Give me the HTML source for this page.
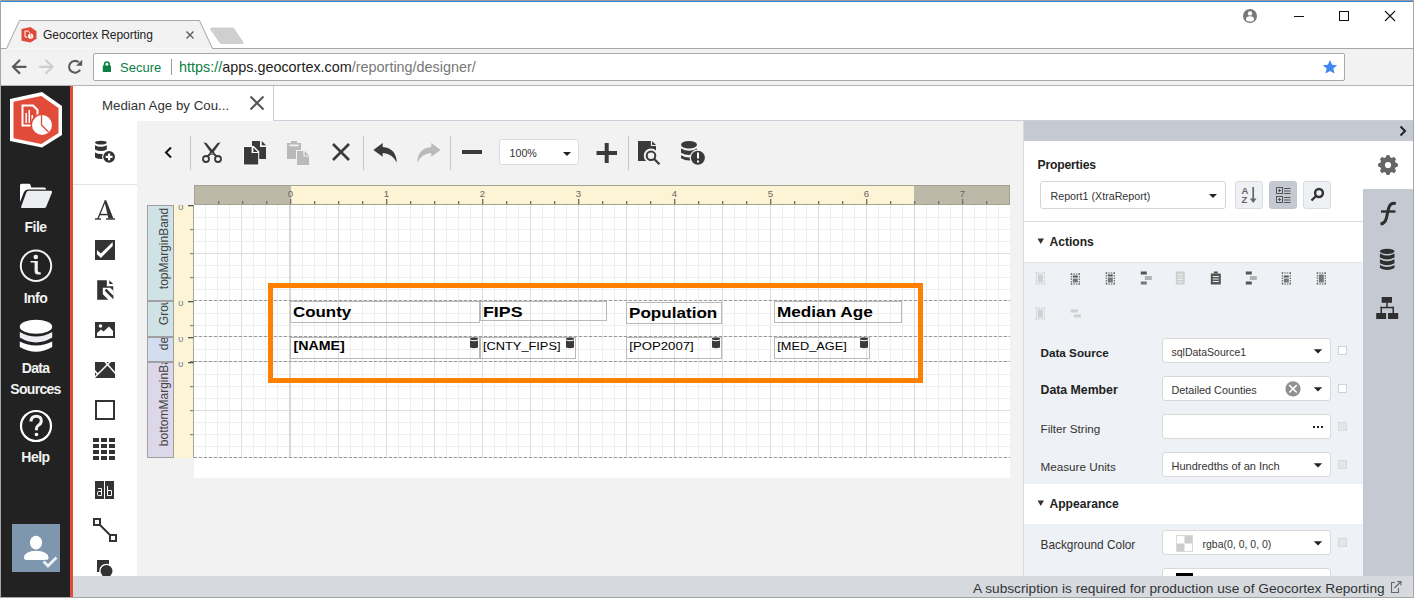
<!DOCTYPE html>
<html><head><meta charset="utf-8">
<style>
*{margin:0;padding:0;box-sizing:border-box}
html,body{width:1414px;height:598px;overflow:hidden;background:#fff;font-family:"Liberation Sans",sans-serif;position:relative}
.a{position:absolute}
svg{position:absolute;overflow:visible}
</style></head><body>

<!-- window border -->
<div class="a" style="left:0;top:0;width:1414px;height:1px;background:#9a9a9a"></div>
<div class="a" style="left:0;top:1px;width:1414px;height:1px;background:#2f86d8"></div>
<div class="a" style="left:0;top:0;width:1px;height:598px;background:#a6a6a6"></div>
<div class="a" style="left:1413px;top:0;width:1px;height:598px;background:#a6a6a6"></div>

<!-- CHROME TABSTRIP -->
<svg style="left:0;top:0" width="1414" height="90">
  <path d="M1 48.5 H6.5 L19.5 20.5 H199.5 L212.5 48.5 H1413" fill="#f2f2f2" stroke="#a6a6a6" stroke-width="1"/>
  <rect x="1" y="49" width="1412" height="36" fill="#f2f2f2"/>
  <path d="M212.5 27.5 H232.5 Q234 27.5 235 29.5 L243 41.5 Q244.5 44 242 44 H221.5 Q220 44 219 42 L210.5 30 Q209.5 27.5 212.5 27.5Z" fill="#cfcfcf"/>
</svg>


<!-- favicon -->
<svg style="left:0;top:0" width="50" height="50" viewBox="0 0 50 50">
  <path d="M30.5 27 L36.5 31.2 L36.5 38.7 L30.5 42.6 L21.5 40.7 L21.5 29.1Z" fill="#e04a3a"/>
  <path d="M25 31 H28.2 L29.5 32.3 V37 H25Z" fill="none" stroke="#fff" stroke-width="1"/>
  <circle cx="30.7" cy="36.2" r="3.2" fill="#e04a3a"/>
  <circle cx="30.7" cy="36.2" r="2.6" fill="#fff"/>
  <path d="M30.5 33.6 V36.3 L32.3 38" fill="none" stroke="#e04a3a" stroke-width="0.6"/>
</svg>
<div class="a" style="left:43px;top:28px;font-size:12px;color:#222;white-space:nowrap;letter-spacing:-0.05px">Geocortex Reporting</div>
<svg style="left:185px;top:30px" width="10" height="10"><path d="M1.5 1.5 L8.5 8.5 M8.5 1.5 L1.5 8.5" stroke="#5a5a5a" stroke-width="1.4"/></svg>

<!-- profile / window controls -->
<svg style="left:1242px;top:8px" width="16" height="16" viewBox="0 0 16 16">
  <circle cx="8" cy="8" r="7" fill="#777"/>
  <circle cx="8" cy="5.4" r="2.2" fill="#fff"/>
  <ellipse cx="8" cy="10.9" rx="4" ry="2.6" fill="#fff"/>
</svg>
<div class="a" style="left:1294px;top:16px;width:10px;height:1px;background:#111"></div>
<div class="a" style="left:1339px;top:11px;width:10px;height:10px;border:1px solid #111"></div>
<svg style="left:1384px;top:10px" width="12" height="12"><path d="M1 1 L11 11 M11 1 L1 11" stroke="#111" stroke-width="1.1"/></svg>

<!-- toolbar -->
<svg style="left:0;top:50px" width="90" height="30" viewBox="0 50 90 30">
  <path d="M25.6 66.8 H13 M19.4 60.5 L13 66.8 L19.4 73.1" fill="none" stroke="#5a5a5a" stroke-width="2.2" stroke-linecap="round"/>
  <path d="M40 66.8 H52.6 M46.2 60.5 L52.6 66.8 L46.2 73.1" fill="none" stroke="#cfcfcf" stroke-width="2.2" stroke-linecap="round"/>
  <path d="M78.8 62.3 A5.9 5.9 0 1 0 80.1 69.75" fill="none" stroke="#5a5a5a" stroke-width="2.1"/>
  <path d="M76 65.8 L82.2 59.7 V65.8Z" fill="#5a5a5a"/>
</svg>
<div class="a" style="left:93px;top:53px;width:1252px;height:28px;background:#fff;border:1px solid #a9a9a9;border-radius:2px"></div>
<svg style="left:100px;top:58px" width="14" height="16" viewBox="100 58 14 16">
  <path d="M104.6 66 V64.3 A2.3 2.3 0 0 1 109.2 64.3 V66" fill="none" stroke="#0b8043" stroke-width="1.7"/>
  <rect x="102.8" y="65.6" width="8.2" height="6.4" rx="0.6" fill="#0b8043"/>
</svg>
<div class="a" style="left:120px;top:60px;font-size:13px;color:#0b8043;white-space:nowrap">Secure</div>
<div class="a" style="left:171px;top:59px;width:1px;height:16px;background:#999"></div>
<div class="a" style="left:179px;top:58.5px;font-size:14.4px;color:#0b8043;white-space:nowrap">https://<span style="color:#222">apps.geocortex.com</span><span style="color:#777">/reporting/designer/</span></div>
<svg style="left:1322px;top:59px" width="16" height="16" viewBox="0 0 16 16">
  <path d="M8 1 L10.1 5.8 L15.2 6.2 L11.3 9.5 L12.5 14.6 L8 11.9 L3.5 14.6 L4.7 9.5 L0.8 6.2 L5.9 5.8Z" fill="#4285f4"/>
</svg>
<div class="a" style="left:1px;top:85px;width:1412px;height:1px;background:#b4b4b4"></div>


<!-- APP -->
<div class="a" style="left:1px;top:86px;width:69px;height:511px;background:#222222"></div>
<div class="a" style="left:70px;top:86px;width:3px;height:511px;background:#e04b3a"></div>
<div class="a" style="left:73px;top:86px;width:1340px;height:35px;background:#fff"></div>
<div class="a" style="left:273px;top:120px;width:1140px;height:1px;background:#c9d0d9"></div>
<div class="a" style="left:273px;top:86px;width:1px;height:35px;background:#c9d0d9"></div>
<div class="a" style="left:102px;top:98px;font-size:13.3px;color:#333;white-space:nowrap">Median Age by Cou...</div>
<svg style="left:249px;top:95px" width="16" height="16"><path d="M1.5 1.5 L14.5 14.5 M14.5 1.5 L1.5 14.5" stroke="#555" stroke-width="2"/></svg>

<!-- gray work area -->
<div class="a" style="left:137px;top:121px;width:886px;height:455px;background:#f2f2f2"></div>
<!-- toolbox -->
<div class="a" style="left:73px;top:121px;width:64px;height:455px;background:#fff"></div>
<div class="a" style="left:73px;top:184px;width:64px;height:1px;background:#dfe3e8"></div>

<!-- sidebar logo -->
<svg style="left:0;top:86px" width="70" height="70" viewBox="0 86 70 70">
  <path d="M42 92 L62 106 L62 135 L42 147.5 L10 141 L10 99Z" fill="#fff"/>
  <path d="M41.3 96 L58.5 108 L58.5 133 L41.3 144 L13.5 138.2 L13.5 101.8Z" fill="#e04b3a"/>
  <path d="M21.5 104.5 H33.5 L38.5 109.5 V126.5 H21.5Z" fill="#fff"/>
  <path d="M23.5 106.5 H32.5 L36.5 110.5 V124.5 H23.5Z" fill="#e04b3a"/>
  <rect x="25.5" y="113" width="1.5" height="10" fill="#fff"/>
  <rect x="28.5" y="110" width="1.5" height="13" fill="#fff"/>
  <rect x="31.5" y="115" width="1.5" height="8" fill="#fff"/>
  <circle cx="42" cy="125" r="11.5" fill="#e04b3a"/>
  <circle cx="42" cy="125" r="10" fill="#fff"/>
  <path d="M41.5 114.5 V125 L48.5 132" fill="none" stroke="#e04b3a" stroke-width="1.3"/>
</svg>
<!-- File -->
<svg style="left:0;top:170px" width="70" height="50" viewBox="0 170 70 50">
  <path d="M21.5 183.7 H29 Q30 183.7 30.5 185 L31.3 187.5 H44.5 Q46 187.5 46 189 V189.5 H28 Q25 189.5 24 192 L20 202 V185.2 Q20 183.7 21.5 183.7Z" fill="#fff"/>
  <path d="M28.5 190.8 H50.8 Q52.6 190.8 52 192.5 L46.2 206.8 Q45.7 208 44.3 208 H22.2 Q20.6 208 21.2 206.5 L26.3 192.4 Q26.8 190.8 28.5 190.8Z" fill="#eceef2"/>
</svg>
<div class="a" style="left:0;top:219px;width:71px;text-align:center;font-size:14px;color:#f2f2f2;font-weight:bold;letter-spacing:-0.5px">File</div>
<!-- Info -->
<svg style="left:0;top:240px" width="70" height="50" viewBox="0 240 70 50">
  <circle cx="36" cy="265.7" r="15.2" fill="none" stroke="#f2f2f2" stroke-width="2"/>
  <circle cx="35.8" cy="257" r="2.3" fill="#f2f2f2"/>
  <path d="M30.5 261 H37.8 V270.5 Q37.8 272.4 40.8 272.4 V274.5 H38 Q34.6 274.5 34.6 271 V263.3 Q34.6 262.6 33.6 262.6 H30.5Z" fill="#f2f2f2"/>
</svg>
<div class="a" style="left:0;top:289.5px;width:71px;text-align:center;font-size:14px;color:#f2f2f2;font-weight:bold;letter-spacing:-0.5px">Info</div>
<!-- Data Sources -->
<svg style="left:0;top:300px" width="70" height="60" viewBox="0 300 70 60">
  <ellipse cx="36" cy="326.7" rx="16.2" ry="7" fill="#fff"/>
  <path d="M19.8 332 Q36 341 52.2 332 V337.5 Q36 347.3 19.8 337.5Z" fill="#eceef2"/>
  <path d="M19.8 341.4 Q36 349.6 52.2 341.4 V347 Q36 356.6 19.8 347Z" fill="#fff"/>
</svg>
<div class="a" style="left:0;top:357.5px;width:71px;text-align:center;font-size:14px;line-height:21px;color:#f2f2f2;font-weight:bold;letter-spacing:-0.7px">Data<br>Sources</div>
<!-- Help -->
<svg style="left:19px;top:409px" width="34" height="34" viewBox="0 0 34 34">
  <circle cx="17" cy="17" r="15" fill="none" stroke="#fff" stroke-width="2.2"/>
  <path d="M12 12.5 Q12 7.2 17.2 7.2 Q22.3 7.2 22.3 11.8 Q22.3 14.8 19.5 16.3 Q17.4 17.5 17.4 20 V21.3" fill="none" stroke="#f2f2f2" stroke-width="3"/>
  <circle cx="17.5" cy="25.5" r="1.8" fill="#fff"/>
</svg>
<div class="a" style="left:0;top:449px;width:71px;text-align:center;font-size:14px;color:#f2f2f2;font-weight:bold;letter-spacing:-0.5px">Help</div>
<!-- user -->
<div class="a" style="left:12px;top:524px;width:48px;height:48px;background:#7f97ae"></div>
<svg style="left:0;top:500px" width="70" height="80" viewBox="0 500 70 80">
  <ellipse cx="36" cy="542.6" rx="6.1" ry="6.8" fill="#fff"/>
  <path d="M24 557.5 Q24.5 551.2 36 550.8 Q47.8 551.2 48.5 557.5 Q48.5 560 46 560 H26.5 Q24 560 24 557.5Z" fill="#fff"/>
  <path d="M43.6 561.4 L48 566 L56.4 557.6" fill="none" stroke="#7f97ae" stroke-width="6"/>
  <path d="M43.6 561.4 L48 566 L56.4 557.6" fill="none" stroke="#eef0f4" stroke-width="2.8"/>
</svg>


<!-- toolbox icons -->
<svg style="left:0;top:0" width="140" height="598" viewBox="0 0 140 598">
 <g fill="#333">
  <!-- db add -->
  <ellipse cx="100.9" cy="142.6" rx="5.9" ry="1.9"/>
  <path d="M95 145.2 Q100.9 148.4 106.8 145.2 V149.4 Q100.9 152.6 95 149.4Z"/>
  <path d="M95 152.4 Q100.9 155.6 106.8 152.4 V157.6 Q100.9 160.6 95 157.6Z"/>
  <circle cx="109.1" cy="156.8" r="7" fill="#fff"/>
  <circle cx="109.1" cy="156.8" r="5.9"/>
  <path d="M109.1 153.4 V160.2 M105.7 156.8 H112.5" stroke="#fff" stroke-width="2.2"/>
  <!-- checkbox -->
  <rect x="95" y="240" width="20" height="20"/>
  <path d="M96.9 250 L100.9 253.6 L112.7 242 V245.9 L100.9 257.9 L96.9 254.3Z" fill="#fff"/>
  <!-- richtext -->
  <path d="M97.2 280.2 H106.8 V286.3 H113.2 V299.7 H97.2Z"/>
  <path d="M109.3 280.3 L113.2 284 H109.3Z"/>
  <path d="M102.8 287.8 H110.3 L113.3 290.8 V300 H108.6 L102.8 294.3Z" fill="#fff"/>
  <path d="M104.6 290.4 L106.4 288.8 L113.3 295.8 V299.2Z"/>
  <!-- picture -->
  <rect x="95" y="322" width="20" height="16"/>
  <path d="M97 336 V333 L101 329.5 L103.5 331.5 L109 326.5 L113 331 V336Z" fill="#fff"/>
  <circle cx="100.5" cy="326" r="1.8" fill="#fff"/>
  <!-- shape cross -->
  <rect x="95" y="362" width="20" height="16"/>
  <path d="M104 360.5 L116 374 M111.5 360.5 L94.5 377.5 M94.5 370.5 L97.8 374.2" stroke="#fff" stroke-width="1.5"/>
  <!-- rectangle -->
  <rect x="96" y="401" width="18" height="18" fill="none" stroke="#333" stroke-width="2"/>
  <!-- table -->
  <rect x="93" y="438" width="6" height="4"/><rect x="101" y="438" width="6" height="4"/><rect x="109" y="438" width="6" height="4"/>
  <rect x="93" y="444" width="6" height="4"/><rect x="101" y="444" width="6" height="4"/><rect x="109" y="444" width="6" height="4"/>
  <rect x="93" y="450" width="6" height="4"/><rect x="101" y="450" width="6" height="4"/><rect x="109" y="450" width="6" height="4"/>
  <rect x="93" y="456" width="6" height="4"/><rect x="101" y="456" width="6" height="4"/><rect x="109" y="456" width="6" height="4"/>
  <!-- ab -->
  <rect x="95" y="481" width="9" height="18"/><rect x="105" y="481" width="9" height="18"/>
  <!-- connector -->
  <rect x="94" y="519" width="6" height="6" fill="none" stroke="#333" stroke-width="2"/>
  <rect x="110" y="535" width="6" height="6" fill="none" stroke="#333" stroke-width="2"/>
  <path d="M100 525 L110 535" stroke="#333" stroke-width="2"/>
  <!-- shape -->
  <rect x="97" y="560" width="12" height="12"/>
  <circle cx="106.5" cy="571" r="7.3" fill="#fff"/>
  <circle cx="106.5" cy="571" r="6"/>
 </g>
 <path d="M98 488.5 H101.5 V495.5 H98.5 Q97.5 495.5 97.5 494.5 V492.5 Q97.5 491.5 98.5 491.5 H101.5" fill="none" stroke="#fff" stroke-width="1"/>
 <path d="M107.5 486 V495.5 H111.5 V490.5 H107.5" fill="none" stroke="#fff" stroke-width="1"/>
 <g fill="#333"><path d="M104.2 200.3 H106.2 L113.4 218.6 H108.4Z"/><path d="M104.9 201.8 L97.9 218.7" stroke="#333" stroke-width="1.3"/><rect x="99.6" y="213.8" width="8" height="1.5"/><rect x="95" y="218.3" width="6" height="1.4"/><rect x="106" y="218.3" width="9" height="1.4"/></g>
</svg>


<!-- designer toolbar -->
<svg style="left:0;top:0" width="720" height="180" viewBox="0 0 720 180">
 <path d="M171 147.5 L166 152.5 L171 157.5" fill="none" stroke="#111" stroke-width="2"/>
 <rect x="190" y="136" width="1" height="34" fill="#c8c8c8"/>
 <rect x="363" y="136" width="1" height="34" fill="#c8c8c8"/>
 <rect x="450" y="136" width="1" height="34" fill="#c8c8c8"/>
 <rect x="628" y="136" width="1" height="34" fill="#c8c8c8"/>
 <g fill="#3a3a3a">
  <!-- scissors -->
  <path d="M203.5 142.5 L206.5 143 L214.5 152.8 L212.5 155Z"/>
  <path d="M220.5 142.5 L217.5 143 L209.5 152.8 L211.5 155Z"/><circle cx="212" cy="153.6" r="0.8" fill="#f2f2f2"/>
  <circle cx="206" cy="159" r="3" fill="none" stroke="#3a3a3a" stroke-width="1.8"/>
  <circle cx="218" cy="159" r="3" fill="none" stroke="#3a3a3a" stroke-width="1.8"/>
  <path d="M207.5 156.5 L211 153 M216.5 156.5 L213 153" stroke="#3a3a3a" stroke-width="1.8"/>
  <!-- copy -->
  <path d="M252 141 H260 V147 H266 V159 H252Z"/>
  <path d="M261.8 141 L266 145.2 H261.8Z"/>
  <path d="M243 146 H253.8 L259.2 151.4 V165.6 H243Z" fill="#fff"/>
  <path d="M244 147 H251.6 V153 H258.2 V164.6 H244Z"/>
  <path d="M253.4 147.6 L257.8 152 H253.4Z"/>
  <!-- x -->
  <path d="M333 144 L349 160 M349 144 L333 160" stroke="#3a3a3a" stroke-width="2.6"/>
  <!-- undo -->
  <path d="M373.4 150 L382.7 143 V147 Q396 148 396.8 162.4 Q392 153.5 382.7 153.1 V156.8Z"/>
  <!-- minus -->
  <rect x="462" y="150" width="20" height="4"/>
  <!-- plus -->
  <rect x="596.5" y="151" width="20.5" height="4"/>
  <rect x="604.7" y="143" width="4" height="20"/>
  <!-- preview -->
  <path d="M638 141 H652 L656 145 V161 H638Z"/>
  <path d="M651.5 140.5 V145.5 H656.5" fill="none" stroke="#f2f2f2" stroke-width="1.2"/>
  <circle cx="651" cy="155.7" r="7.2" fill="#f2f2f2"/>
  <circle cx="651" cy="155.7" r="4.3" fill="none" stroke="#3a3a3a" stroke-width="2"/>
  <path d="M654 158.7 L659.5 164.2" stroke="#3a3a3a" stroke-width="2.2"/>
  <!-- db warning -->
  <ellipse cx="689" cy="144.8" rx="8" ry="3.8"/>
  <path d="M681 148.6 Q689 153.1 697 148.6 V152.8 Q689 157.3 681 152.8Z"/>
  <path d="M681 155.2 Q689 159.7 697 155.2 V158.2 Q689 162.7 681 158.2Z"/>
  <circle cx="697.9" cy="157.8" r="8.3" fill="#f2f2f2"/>
  <circle cx="697.9" cy="157.8" r="7"/>
  <rect x="697" y="152.5" width="2" height="6" fill="#fff"/>
  <rect x="697" y="160.5" width="2" height="2" fill="#fff"/>
 </g>
 <g fill="#bababa">
  <!-- paste -->
  <path d="M287 143 H291 V141 H297 V143 H301 V159 H287Z"/>
  <rect x="289.5" y="144.5" width="9" height="1.8" fill="#f2f2f2"/>
  <path d="M296 150 H305 L310 155 V166 H296Z" fill="#f2f2f2"/>
  <path d="M297 151 H304.5 L309 155.5 V165 H297Z"/>
  <path d="M304 150.5 V156 H309.5" fill="none" stroke="#f2f2f2" stroke-width="1.2"/>
  <!-- redo -->
  <path d="M440.6 150 L431.3 143 V147 Q418 148 417.2 162.4 Q422 153.5 431.3 153.1 V156.8Z"/>
 </g>
</svg>
<div class="a" style="left:499px;top:139px;width:80px;height:26px;background:#fff;border:1px solid #dcdcdc;border-radius:3px"></div>
<div class="a" style="left:509.5px;top:147px;font-size:10.7px;color:#333">100%</div>
<svg style="left:561.5px;top:150.5px" width="10" height="6"><path d="M1 1 H9 L5 5Z" fill="#222"/></svg>

<!-- DESIGNER -->
<svg style="left:0;top:0" width="1414" height="598" viewBox="0 0 1414 598">
<rect x="194" y="185" width="816" height="293" fill="#fff"/>
<rect x="277" y="205" width="1" height="253" fill="#efefef"/>
<rect x="265" y="205" width="1" height="253" fill="#efefef"/>
<rect x="253" y="205" width="1" height="253" fill="#efefef"/>
<rect x="241" y="205" width="1" height="253" fill="#dedede"/>
<rect x="229" y="205" width="1" height="253" fill="#efefef"/>
<rect x="217" y="205" width="1" height="253" fill="#efefef"/>
<rect x="205" y="205" width="1" height="253" fill="#efefef"/>
<rect x="302" y="205" width="1" height="253" fill="#efefef"/>
<rect x="314" y="205" width="1" height="253" fill="#efefef"/>
<rect x="326" y="205" width="1" height="253" fill="#efefef"/>
<rect x="338" y="205" width="1" height="253" fill="#dedede"/>
<rect x="350" y="205" width="1" height="253" fill="#efefef"/>
<rect x="362" y="205" width="1" height="253" fill="#efefef"/>
<rect x="374" y="205" width="1" height="253" fill="#efefef"/>
<rect x="386" y="205" width="1" height="253" fill="#dedede"/>
<rect x="398" y="205" width="1" height="253" fill="#efefef"/>
<rect x="410" y="205" width="1" height="253" fill="#efefef"/>
<rect x="422" y="205" width="1" height="253" fill="#efefef"/>
<rect x="434" y="205" width="1" height="253" fill="#dedede"/>
<rect x="446" y="205" width="1" height="253" fill="#efefef"/>
<rect x="458" y="205" width="1" height="253" fill="#efefef"/>
<rect x="470" y="205" width="1" height="253" fill="#efefef"/>
<rect x="482" y="205" width="1" height="253" fill="#dedede"/>
<rect x="494" y="205" width="1" height="253" fill="#efefef"/>
<rect x="506" y="205" width="1" height="253" fill="#efefef"/>
<rect x="518" y="205" width="1" height="253" fill="#efefef"/>
<rect x="530" y="205" width="1" height="253" fill="#dedede"/>
<rect x="542" y="205" width="1" height="253" fill="#efefef"/>
<rect x="554" y="205" width="1" height="253" fill="#efefef"/>
<rect x="566" y="205" width="1" height="253" fill="#efefef"/>
<rect x="578" y="205" width="1" height="253" fill="#dedede"/>
<rect x="590" y="205" width="1" height="253" fill="#efefef"/>
<rect x="602" y="205" width="1" height="253" fill="#efefef"/>
<rect x="614" y="205" width="1" height="253" fill="#efefef"/>
<rect x="626" y="205" width="1" height="253" fill="#dedede"/>
<rect x="638" y="205" width="1" height="253" fill="#efefef"/>
<rect x="650" y="205" width="1" height="253" fill="#efefef"/>
<rect x="662" y="205" width="1" height="253" fill="#efefef"/>
<rect x="674" y="205" width="1" height="253" fill="#dedede"/>
<rect x="686" y="205" width="1" height="253" fill="#efefef"/>
<rect x="698" y="205" width="1" height="253" fill="#efefef"/>
<rect x="710" y="205" width="1" height="253" fill="#efefef"/>
<rect x="722" y="205" width="1" height="253" fill="#dedede"/>
<rect x="734" y="205" width="1" height="253" fill="#efefef"/>
<rect x="746" y="205" width="1" height="253" fill="#efefef"/>
<rect x="758" y="205" width="1" height="253" fill="#efefef"/>
<rect x="770" y="205" width="1" height="253" fill="#dedede"/>
<rect x="782" y="205" width="1" height="253" fill="#efefef"/>
<rect x="794" y="205" width="1" height="253" fill="#efefef"/>
<rect x="806" y="205" width="1" height="253" fill="#efefef"/>
<rect x="818" y="205" width="1" height="253" fill="#dedede"/>
<rect x="830" y="205" width="1" height="253" fill="#efefef"/>
<rect x="842" y="205" width="1" height="253" fill="#efefef"/>
<rect x="854" y="205" width="1" height="253" fill="#efefef"/>
<rect x="866" y="205" width="1" height="253" fill="#dedede"/>
<rect x="878" y="205" width="1" height="253" fill="#efefef"/>
<rect x="890" y="205" width="1" height="253" fill="#efefef"/>
<rect x="902" y="205" width="1" height="253" fill="#efefef"/>
<rect x="914" y="205" width="1" height="253" fill="#dedede"/>
<rect x="926" y="205" width="1" height="253" fill="#efefef"/>
<rect x="938" y="205" width="1" height="253" fill="#efefef"/>
<rect x="950" y="205" width="1" height="253" fill="#efefef"/>
<rect x="962" y="205" width="1" height="253" fill="#dedede"/>
<rect x="974" y="205" width="1" height="253" fill="#efefef"/>
<rect x="986" y="205" width="1" height="253" fill="#efefef"/>
<rect x="998" y="205" width="1" height="253" fill="#efefef"/>
<rect x="194" y="217" width="816" height="1" fill="#efefef"/>
<rect x="194" y="229" width="816" height="1" fill="#efefef"/>
<rect x="194" y="241" width="816" height="1" fill="#efefef"/>
<rect x="194" y="253" width="816" height="1" fill="#dedede"/>
<rect x="194" y="265" width="816" height="1" fill="#efefef"/>
<rect x="194" y="277" width="816" height="1" fill="#efefef"/>
<rect x="194" y="289" width="816" height="1" fill="#efefef"/>
<rect x="194" y="313" width="816" height="1" fill="#efefef"/>
<rect x="194" y="325" width="816" height="1" fill="#efefef"/>
<rect x="194" y="349" width="816" height="1" fill="#efefef"/>
<rect x="194" y="361" width="816" height="1" fill="#efefef"/>
<rect x="194" y="374" width="816" height="1" fill="#efefef"/>
<rect x="194" y="386" width="816" height="1" fill="#efefef"/>
<rect x="194" y="398" width="816" height="1" fill="#efefef"/>
<rect x="194" y="410" width="816" height="1" fill="#dedede"/>
<rect x="194" y="422" width="816" height="1" fill="#efefef"/>
<rect x="194" y="434" width="816" height="1" fill="#efefef"/>
<rect x="194" y="446" width="816" height="1" fill="#efefef"/>
<rect x="289" y="205" width="2" height="253" fill="#d8d8d8"/>
<rect x="914" y="205" width="1" height="253" fill="#d8d8d8"/>
<path d="M194 300.5 H1010" stroke="#9a9a9a" stroke-width="1" stroke-dasharray="3.5,1.5" stroke-dashoffset="0.3"/>
<path d="M194 336.5 H1010" stroke="#9a9a9a" stroke-width="1" stroke-dasharray="3.5,1.5" stroke-dashoffset="0.3"/>
<path d="M194 361.5 H1010" stroke="#9a9a9a" stroke-width="1" stroke-dasharray="3.5,1.5" stroke-dashoffset="0.3"/>
<path d="M194 457.5 H1010" stroke="#9a9a9a" stroke-width="1" stroke-dasharray="3.5,1.5" stroke-dashoffset="0.3"/>
<rect x="194.5" y="185.5" width="815" height="19" fill="#bdb9a9" stroke="#a6a290" stroke-width="1"/>
<rect x="291" y="186" width="623" height="18" fill="#fdf3d5"/>
<rect x="218" y="201" width="1.3" height="3" fill="#6f6c62"/>
<rect x="242" y="201" width="1.3" height="3" fill="#6f6c62"/>
<rect x="266" y="201" width="1.3" height="3" fill="#6f6c62"/>
<rect x="290" y="199" width="1.3" height="5" fill="#6f6c62"/>
<rect x="314" y="201" width="1.3" height="3" fill="#6f6c62"/>
<rect x="338" y="201" width="1.3" height="3" fill="#6f6c62"/>
<rect x="362" y="201" width="1.3" height="3" fill="#6f6c62"/>
<rect x="386" y="199" width="1.3" height="5" fill="#6f6c62"/>
<rect x="410" y="201" width="1.3" height="3" fill="#6f6c62"/>
<rect x="434" y="201" width="1.3" height="3" fill="#6f6c62"/>
<rect x="458" y="201" width="1.3" height="3" fill="#6f6c62"/>
<rect x="482" y="199" width="1.3" height="5" fill="#6f6c62"/>
<rect x="506" y="201" width="1.3" height="3" fill="#6f6c62"/>
<rect x="530" y="201" width="1.3" height="3" fill="#6f6c62"/>
<rect x="554" y="201" width="1.3" height="3" fill="#6f6c62"/>
<rect x="578" y="199" width="1.3" height="5" fill="#6f6c62"/>
<rect x="602" y="201" width="1.3" height="3" fill="#6f6c62"/>
<rect x="626" y="201" width="1.3" height="3" fill="#6f6c62"/>
<rect x="650" y="201" width="1.3" height="3" fill="#6f6c62"/>
<rect x="674" y="199" width="1.3" height="5" fill="#6f6c62"/>
<rect x="698" y="201" width="1.3" height="3" fill="#6f6c62"/>
<rect x="722" y="201" width="1.3" height="3" fill="#6f6c62"/>
<rect x="746" y="201" width="1.3" height="3" fill="#6f6c62"/>
<rect x="770" y="199" width="1.3" height="5" fill="#6f6c62"/>
<rect x="794" y="201" width="1.3" height="3" fill="#6f6c62"/>
<rect x="818" y="201" width="1.3" height="3" fill="#6f6c62"/>
<rect x="842" y="201" width="1.3" height="3" fill="#6f6c62"/>
<rect x="866" y="199" width="1.3" height="5" fill="#6f6c62"/>
<rect x="890" y="201" width="1.3" height="3" fill="#6f6c62"/>
<rect x="914" y="201" width="1.3" height="3" fill="#6f6c62"/>
<rect x="938" y="201" width="1.3" height="3" fill="#6f6c62"/>
<rect x="962" y="199" width="1.3" height="5" fill="#6f6c62"/>
<rect x="986" y="201" width="1.3" height="3" fill="#6f6c62"/>
<text x="290.5" y="197" font-size="9.6" fill="#666" text-anchor="middle" font-family="Liberation Sans">0</text>
<text x="386.5" y="197" font-size="9.6" fill="#666" text-anchor="middle" font-family="Liberation Sans">1</text>
<text x="482.5" y="197" font-size="9.6" fill="#666" text-anchor="middle" font-family="Liberation Sans">2</text>
<text x="578.5" y="197" font-size="9.6" fill="#666" text-anchor="middle" font-family="Liberation Sans">3</text>
<text x="674.5" y="197" font-size="9.6" fill="#666" text-anchor="middle" font-family="Liberation Sans">4</text>
<text x="770.5" y="197" font-size="9.6" fill="#666" text-anchor="middle" font-family="Liberation Sans">5</text>
<text x="866.5" y="197" font-size="9.6" fill="#666" text-anchor="middle" font-family="Liberation Sans">6</text>
<text x="962.5" y="197" font-size="9.6" fill="#666" text-anchor="middle" font-family="Liberation Sans">7</text>
<rect x="174" y="205" width="19.5" height="253" fill="#fdf3d5"/>
<rect x="193" y="205" width="1" height="253" fill="#a9a695"/>
<rect x="188" y="205" width="5.5" height="1.3" fill="#555"/>
<rect x="190" y="229" width="3.5" height="1.2" fill="#8a877c"/>
<rect x="190" y="253" width="3.5" height="1.2" fill="#8a877c"/>
<rect x="190" y="277" width="3.5" height="1.2" fill="#8a877c"/>
<clipPath id="vr205"><rect x="174" y="205" width="19" height="96"/></clipPath>
<text clip-path="url(#vr205)" x="180.8" y="209.5" font-size="9" fill="#5a7fa0" text-anchor="middle" font-family="Liberation Sans">0</text>
<rect x="188" y="301" width="5.5" height="1.3" fill="#555"/>
<rect x="190" y="325" width="3.5" height="1.2" fill="#8a877c"/>
<clipPath id="vr301"><rect x="174" y="301" width="19" height="36"/></clipPath>
<text clip-path="url(#vr301)" x="180.8" y="305.5" font-size="9" fill="#5a7fa0" text-anchor="middle" font-family="Liberation Sans">0</text>
<rect x="188" y="337" width="5.5" height="1.3" fill="#555"/>
<rect x="190" y="361" width="3.5" height="1.2" fill="#8a877c"/>
<clipPath id="vr337"><rect x="174" y="337" width="19" height="25"/></clipPath>
<text clip-path="url(#vr337)" x="180.8" y="341.5" font-size="9" fill="#5a7fa0" text-anchor="middle" font-family="Liberation Sans">0</text>
<rect x="188" y="362" width="5.5" height="1.3" fill="#555"/>
<rect x="190" y="386" width="3.5" height="1.2" fill="#8a877c"/>
<rect x="190" y="410" width="3.5" height="1.2" fill="#8a877c"/>
<rect x="190" y="434" width="3.5" height="1.2" fill="#8a877c"/>
<clipPath id="vr362"><rect x="174" y="362" width="19" height="96"/></clipPath>
<text clip-path="url(#vr362)" x="180.8" y="366.5" font-size="9" fill="#5a7fa0" text-anchor="middle" font-family="Liberation Sans">0</text>
<clipPath id="cl0"><rect x="147" y="206" width="27" height="94"/></clipPath>
<rect x="147.5" y="205.5" width="26" height="95" fill="#cfe3e6" stroke="#a0a0a0" stroke-width="1"/>
<g clip-path="url(#cl0)"><text transform="translate(167.5,289.2) rotate(-90)" font-size="12" fill="#444" font-family="Liberation Sans">topMarginBand</text></g>
<clipPath id="cl1"><rect x="147" y="302" width="27" height="34"/></clipPath>
<rect x="147.5" y="301.5" width="26" height="35" fill="#cfe3e6" stroke="#a0a0a0" stroke-width="1"/>
<g clip-path="url(#cl1)"><text transform="translate(167.5,325.2) rotate(-90)" font-size="12" fill="#444" font-family="Liberation Sans">GroupHeader1</text></g>
<clipPath id="cl2"><rect x="147" y="338" width="27" height="23"/></clipPath>
<rect x="147.5" y="337.5" width="26" height="24" fill="#d2def0" stroke="#a0a0a0" stroke-width="1"/>
<g clip-path="url(#cl2)"><text transform="translate(167.5,350.2) rotate(-90)" font-size="12" fill="#444" font-family="Liberation Sans">detailBand1</text></g>
<clipPath id="cl3"><rect x="147" y="363" width="27" height="94"/></clipPath>
<rect x="147.5" y="362.5" width="26" height="95" fill="#ddd7ea" stroke="#a0a0a0" stroke-width="1"/>
<g clip-path="url(#cl3)"><text transform="translate(167.5,446.2) rotate(-90)" font-size="12" fill="#444" font-family="Liberation Sans">bottomMarginBand</text></g>
</svg>

<!-- report controls -->
<svg style="left:0;top:0" width="1414" height="598" viewBox="0 0 1414 598">
 <g fill="none" stroke="#b9b9b9" stroke-width="1">
  <rect x="290.5" y="301.5" width="189" height="21"/>
  <rect x="480.5" y="301.5" width="126" height="19"/>
  <rect x="626.5" y="302.5" width="95" height="21"/>
  <rect x="774.5" y="301.5" width="127" height="21"/>
  <rect x="290.5" y="337.5" width="189" height="21"/>
  <rect x="480.5" y="337.5" width="95" height="21"/>
  <rect x="626.5" y="337.5" width="95" height="21"/>
  <rect x="774.5" y="337.5" width="95" height="21"/>
 </g>
 <g font-family="Liberation Sans" fill="#000" lengthAdjust="spacingAndGlyphs">
  <text x="293" y="317.3" font-size="15.2" font-weight="bold" textLength="58.2" lengthAdjust="spacingAndGlyphs">County</text>
  <text x="483" y="317" font-size="15" font-weight="bold" textLength="39.5" lengthAdjust="spacingAndGlyphs">FIPS</text>
  <text x="629" y="317.8" font-size="14.5" font-weight="bold" textLength="88.3" lengthAdjust="spacingAndGlyphs">Population</text>
  <text x="777" y="317.3" font-size="15.2" font-weight="bold" textLength="95.7" lengthAdjust="spacingAndGlyphs">Median Age</text>
  <text x="293.5" y="349.7" font-size="12.4" font-weight="bold" textLength="51.2" lengthAdjust="spacingAndGlyphs">[NAME]</text>
  <text x="483" y="349.7" font-size="11.8" textLength="77.5" lengthAdjust="spacingAndGlyphs">[CNTY_FIPS]</text>
  <text x="629.3" y="349.7" font-size="11.8" textLength="64.4" lengthAdjust="spacingAndGlyphs">[POP2007]</text>
  <text x="777.3" y="349.7" font-size="11.8" textLength="69.4" lengthAdjust="spacingAndGlyphs">[MED_AGE]</text>
 </g>
 <g fill="#3a3a3a">
  <path d="M470 338.3 Q474 336.8 478 338.3 V339.4 Q474 340.9 470 339.4Z M470 340.6 Q474 342.1 478 340.6 V347.6 Q474 349.1 470 347.6Z"/>
  <path d="M566 338.3 Q570 336.8 574 338.3 V339.4 Q570 340.9 566 339.4Z M566 340.6 Q570 342.1 574 340.6 V347.6 Q570 349.1 566 347.6Z"/>
  <path d="M712 338.3 Q716 336.8 720 338.3 V339.4 Q716 340.9 712 339.4Z M712 340.6 Q716 342.1 720 340.6 V347.6 Q716 349.1 712 347.6Z"/>
  <path d="M860 338.3 Q864 336.8 868 338.3 V339.4 Q864 340.9 860 339.4Z M860 340.6 Q864 342.1 868 340.6 V347.6 Q864 349.1 860 347.6Z"/>
 </g>
 <rect x="270.5" y="285.5" width="650" height="95" fill="none" stroke="#ff7f00" stroke-width="5"/>
</svg>


<!-- RIGHT PANEL -->
<div class="a" style="left:1023px;top:121px;width:1px;height:455px;background:#d9d9d9"></div>
<div class="a" style="left:1024px;top:121px;width:389px;height:455px;background:#eef1f5"></div>
<div class="a" style="left:1024px;top:121px;width:389px;height:20px;background:#c5c9d1"></div>
<svg style="left:1398px;top:125px" width="10" height="12"><path d="M2.5 1.5 L7 6 L2.5 10.5" fill="none" stroke="#222" stroke-width="2"/></svg>
<div class="a" style="left:1024px;top:141px;width:339px;height:80px;background:#fff"></div>
<div class="a" style="left:1024px;top:221px;width:339px;height:1px;background:#dcdcdc"></div>
<div class="a" style="left:1024px;top:222px;width:339px;height:40px;background:#fff"></div>
<div class="a" style="left:1024px;top:262px;width:339px;height:1px;background:#e3e5e8"></div>
<div class="a" style="left:1024px;top:484px;width:339px;height:40px;background:#fff"></div>
<div class="a" style="left:1363px;top:141px;width:50px;height:48px;background:#fff"></div>
<div class="a" style="left:1363px;top:189px;width:50px;height:387px;background:#c5c9d1"></div>

<div class="a" style="left:1037.5px;top:157.5px;font-size:12.2px;letter-spacing:-0.2px;font-weight:bold;color:#222;white-space:nowrap">Properties</div>
<div class="a" style="left:1040px;top:181px;width:186px;height:28px;background:#fff;border:1px solid #d5d5d5;border-radius:3px"></div>
<div class="a" style="left:1050.5px;top:189.5px;font-size:10.7px;color:#333;white-space:nowrap">Report1 (XtraReport)</div>
<svg style="left:1208px;top:193px" width="10" height="6"><path d="M1 1 H9 L5 5Z" fill="#222"/></svg>
<div class="a" style="left:1235px;top:181px;width:28px;height:28px;background:#eef0f4;border:1px solid #d9dce1;border-radius:3px"></div>
<div class="a" style="left:1269px;top:181px;width:28px;height:28px;background:#c5c9d1;border:1px solid #c0c4cc;border-radius:3px"></div>
<div class="a" style="left:1303px;top:181px;width:28px;height:28px;background:#eef0f4;border:1px solid #d9dce1;border-radius:3px"></div>
<svg style="left:1235px;top:181px" width="100" height="28" viewBox="1235 181 100 28">
  <text x="1241.6" y="193.8" font-family="Liberation Sans" font-weight="bold" font-size="9.5" fill="#666">A</text>
  <text x="1241.6" y="203.4" font-family="Liberation Sans" font-weight="bold" font-size="9.5" fill="#666">Z</text>
  <path d="M1253.2 187 V200" stroke="#666" stroke-width="1.7"/>
  <path d="M1249.8 198.5 L1253.2 203 L1256.6 198.5Z" fill="#666"/>
  <g fill="none" stroke="#555" stroke-width="1">
   <rect x="1276.5" y="187.5" width="6" height="6"/><rect x="1276.5" y="196.5" width="6" height="6"/>
   <path d="M1284 188.5 H1290.5 M1284 191 H1290.5 M1284 193.5 H1290.5 M1284 197.5 H1290.5 M1284 200 H1290.5 M1284 202.5 H1290.5 M1278 190.5 H1281 M1279.5 189 V192 M1278 199.5 H1281 M1279.5 198 V201"/>
  </g>
  <circle cx="1319" cy="193" r="3.9" fill="none" stroke="#333" stroke-width="2.5"/>
  <path d="M1316 196 L1311.5 200.5" stroke="#333" stroke-width="2.4"/>
</svg>
<!-- gear -->
<svg style="left:1377px;top:154px" width="22" height="22" viewBox="0 0 22 22">
  <g fill="#666">
   <circle cx="11" cy="11" r="8"/>
   <rect x="9" y="1" width="4" height="20" rx="1.5"/>
   <rect x="9" y="1" width="4" height="20" rx="1.5" transform="rotate(45 11 11)"/>
   <rect x="9" y="1" width="4" height="20" rx="1.5" transform="rotate(90 11 11)"/>
   <rect x="9" y="1" width="4" height="20" rx="1.5" transform="rotate(135 11 11)"/>
  </g>
  <circle cx="11" cy="11" r="3.1" fill="#fff"/>
</svg>
<!-- f -->
<svg style="left:1376px;top:200px" width="24" height="28" viewBox="0 0 24 28">
  <path d="M19.8 3.6 Q15.5 2.5 13.5 6 Q12.5 8 11.5 13 Q10.5 19 9 21.5 Q7.5 23.5 4.5 24" fill="none" stroke="#2f2f2f" stroke-width="3"/>
  <path d="M5 11.5 H19.5" stroke="#2f2f2f" stroke-width="2.4"/>
</svg>
<!-- db -->
<svg style="left:0;top:0" width="1414" height="598" viewBox="0 0 1414 598">
  <g fill="#2f2f2f">
  <ellipse cx="1387.2" cy="251.3" rx="7.3" ry="2.6"/>
  <path d="M1379.9 253.6 Q1387.2 257.6 1394.5 253.6 V257.5 Q1387.2 261.5 1379.9 257.5Z"/>
  <path d="M1379.9 259.3 Q1387.2 263.3 1394.5 259.3 V263.2 Q1387.2 267.2 1379.9 263.2Z"/>
  <path d="M1379.9 265 Q1387.2 269 1394.5 265 V268 Q1387.2 272 1379.9 268Z"/>
  </g>
  <g fill="#2f2f2f">
   <rect x="1381.7" y="297" width="10.3" height="5.8"/>
   <rect x="1386.2" y="302.5" width="1.5" height="5"/>
   <rect x="1380.5" y="306.8" width="13.5" height="1.5"/>
   <rect x="1380.5" y="306.8" width="1.5" height="6.5"/><rect x="1392.5" y="306.8" width="1.5" height="6.5"/>
   <rect x="1376.2" y="313" width="9.9" height="6"/><rect x="1388" y="313" width="10.2" height="6"/>
  </g>
</svg>
<svg style="left:1037px;top:238px" width="8" height="7"><path d="M0.5 0.5 H7 L3.75 6Z" fill="#333"/></svg>
<div class="a" style="left:1049.5px;top:235px;font-size:12.1px;font-weight:bold;color:#222;white-space:nowrap">Actions</div>
<svg style="left:1037px;top:500px" width="8" height="7"><path d="M0.5 0.5 H7 L3.75 6Z" fill="#333"/></svg>
<div class="a" style="left:1049.5px;top:496.8px;font-size:12.1px;font-weight:bold;color:#222;white-space:nowrap">Appearance</div>


<!-- property rows -->
<div class="a" style="left:1040.5px;top:345.7px;font-size:11.7px;font-weight:bold;color:#222;white-space:nowrap">Data Source</div>
<div class="a" style="left:1040.5px;top:383.3px;font-size:12.3px;font-weight:bold;color:#222;white-space:nowrap">Data Member</div>
<div class="a" style="left:1040.5px;top:421.5px;font-size:11.7px;color:#333;white-space:nowrap">Filter String</div>
<div class="a" style="left:1040.5px;top:459.5px;font-size:11.7px;color:#333;white-space:nowrap">Measure Units</div>
<div class="a" style="left:1040.5px;top:538px;font-size:11.85px;color:#333;white-space:nowrap">Background Color</div>

<div class="a" style="left:1162px;top:338px;width:169px;height:25px;background:#fff;border:1px solid #d9d9d9;border-radius:3px"></div>
<div class="a" style="left:1162px;top:376px;width:169px;height:25px;background:#fff;border:1px solid #d9d9d9;border-radius:3px"></div>
<div class="a" style="left:1162px;top:414px;width:169px;height:25px;background:#fff;border:1px solid #d9d9d9;border-radius:3px"></div>
<div class="a" style="left:1162px;top:452px;width:169px;height:25px;background:#fff;border:1px solid #d9d9d9;border-radius:3px"></div>
<div class="a" style="left:1162px;top:530px;width:169px;height:25px;background:#fff;border:1px solid #d9d9d9;border-radius:3px"></div>
<div class="a" style="left:1162px;top:568px;width:169px;height:26px;background:#fff;border:1px solid #d9d9d9;border-radius:3px"></div>
<div class="a" style="left:1176px;top:573px;width:17px;height:3px;background:#000"></div>

<div class="a" style="left:1171.5px;top:345.5px;font-size:10.5px;color:#333;white-space:nowrap">sqlDataSource1</div>
<div class="a" style="left:1171.5px;top:384px;font-size:10.8px;color:#333;white-space:nowrap">Detailed Counties</div>
<div class="a" style="left:1171.5px;top:460px;font-size:11px;color:#333;white-space:nowrap">Hundredths of an Inch</div>
<div class="a" style="left:1202.5px;top:538px;font-size:10.5px;color:#333;white-space:nowrap">rgba(0, 0, 0, 0)</div>
<svg style="left:1176px;top:535px" width="17" height="17">
  <rect x="0" y="0" width="17" height="17" fill="#fff"/>
  <rect x="0" y="8.5" width="8.5" height="8.5" fill="#cdcdcd"/><rect x="8.5" y="0" width="8.5" height="8.5" fill="#cdcdcd"/>
  <rect x="0.5" y="0.5" width="16" height="16" fill="none" stroke="#d9d9d9" stroke-width="1"/>
</svg>
<svg style="left:0;top:0" width="1414" height="598" viewBox="0 0 1414 598">
  <g fill="#222">
   <path d="M1313.8 349.3 H1322.2 L1318 353.6Z"/>
   <path d="M1313.8 387.3 H1322.2 L1318 391.6Z"/>
   <path d="M1313.8 463.3 H1322.2 L1318 467.6Z"/>
   <path d="M1313.8 541.3 H1322.2 L1318 545.6Z"/>
   <rect x="1313" y="426" width="2" height="2"/><rect x="1317" y="426" width="2" height="2"/><rect x="1321" y="426" width="2" height="2"/>
  </g>
  <circle cx="1293" cy="388.8" r="7.6" fill="#909090"/>
  <path d="M1289.3 385.1 L1296.7 392.5 M1296.7 385.1 L1289.3 392.5" stroke="#fff" stroke-width="1.5"/>
  <g stroke="#cfd3d8" stroke-width="1" fill="#fff">
   <rect x="1338.5" y="346.5" width="8" height="8"/>
   <rect x="1338.5" y="384.5" width="8" height="8"/>
  </g>
  <g stroke="#d6d9dd" stroke-width="1" fill="#e3e5e9">
   <rect x="1338.5" y="422.5" width="8" height="8"/>
   <rect x="1338.5" y="460.5" width="8" height="8"/>
   <rect x="1338.5" y="538.5" width="8" height="8"/>
  </g>
  <!-- action icons --><g transform="translate(0.8,0.5)">
  <g fill="none" stroke-width="1" stroke-dasharray="1.5,1">
   <path d="M1035.5 272 V284 M1043.5 272 V284 M1035 272.5 H1044 M1035 283.5 H1044" stroke="#c8c8c8"/>
   <path d="M1070.5 273 V284 M1078.5 273 V284 M1070 273.5 H1079 M1070 283.5 H1079" stroke="#555"/>
   <path d="M1105.5 272 V284 M1113.5 272 V284 M1105 272.5 H1114 M1105 283.5 H1114" stroke="#555"/>
   <path d="M1281.5 272 V284 M1289.5 272 V284 M1281 272.5 H1290 M1281 283.5 H1290" stroke="#555"/>
   <path d="M1316.5 272 V284 M1324.5 272 V284 M1316 272.5 H1325 M1316 283.5 H1325" stroke="#555"/>
   <path d="M1035.5 307 V319 M1043.5 307 V319 M1035 307.5 H1044 M1035 318.5 H1044" stroke="#c8c8c8"/>
  </g>
  <g>
   <rect x="1037" y="274" width="5" height="8" fill="#d0d0d0"/>
   <rect x="1072" y="275" width="5" height="2" fill="#555"/><rect x="1072" y="278" width="5" height="4" fill="#777"/>
   <rect x="1107" y="274" width="5" height="2" fill="#555"/><rect x="1107" y="277" width="5" height="5" fill="#777"/>
   <rect x="1140" y="271" width="6" height="3" fill="#555"/><rect x="1144" y="276" width="7" height="1" fill="#777"/><rect x="1144" y="278" width="7" height="1" fill="#777"/><rect x="1140" y="281" width="6" height="3" fill="#777"/>
   <rect x="1175" y="271" width="9" height="13" fill="#cfcfcf"/>
   <path d="M1177 274 H1182 M1177 276.5 H1182 M1177 279 H1182 M1177 281.5 H1182" stroke="#eef1f5" stroke-width="1"/>
   <rect x="1210" y="273" width="10" height="11" fill="#555"/><rect x="1213" y="271" width="4" height="2" fill="#555"/>
   <path d="M1212 276 H1218 M1212 278.5 H1218 M1212 281 H1218" stroke="#eef1f5" stroke-width="1"/>
   <rect x="1245" y="271" width="6" height="3" fill="#555"/><rect x="1249" y="276" width="7" height="1" fill="#777"/><rect x="1249" y="278" width="7" height="1" fill="#777"/><rect x="1245" y="281" width="6" height="3" fill="#555"/>
   <rect x="1283" y="275" width="5" height="2" fill="#555"/><rect x="1283" y="278" width="5" height="4" fill="#777"/>
   <rect x="1318" y="274" width="5" height="8" fill="#777"/>
   <rect x="1037" y="309" width="5" height="8" fill="#d0d0d0"/>
   <rect x="1070" y="309" width="7" height="3" fill="#d0d0d0"/><rect x="1073" y="314" width="7" height="3" fill="#d0d0d0"/>
  </g>
</g>
</svg>

<!-- status bar -->
<div class="a" style="left:73px;top:576px;width:1340px;height:21px;background:#d6dadf"></div>
<div class="a" style="left:1px;top:597px;width:1412px;height:1px;background:#a6a6a6"></div>
<div class="a" style="left:973px;top:581px;font-size:13.7px;color:#333;white-space:nowrap">A subscription is required for production use of Geocortex Reporting</div>
<svg style="left:1390px;top:580px" width="13" height="14"><path d="M5 2.5 H1.5 V12.5 H8.5 V8" fill="none" stroke="#666" stroke-width="1.1"/><path d="M7 1.5 H11 V5.5 M11 1.5 L4.5 8" fill="none" stroke="#666" stroke-width="1.1"/></svg>



</body></html>
